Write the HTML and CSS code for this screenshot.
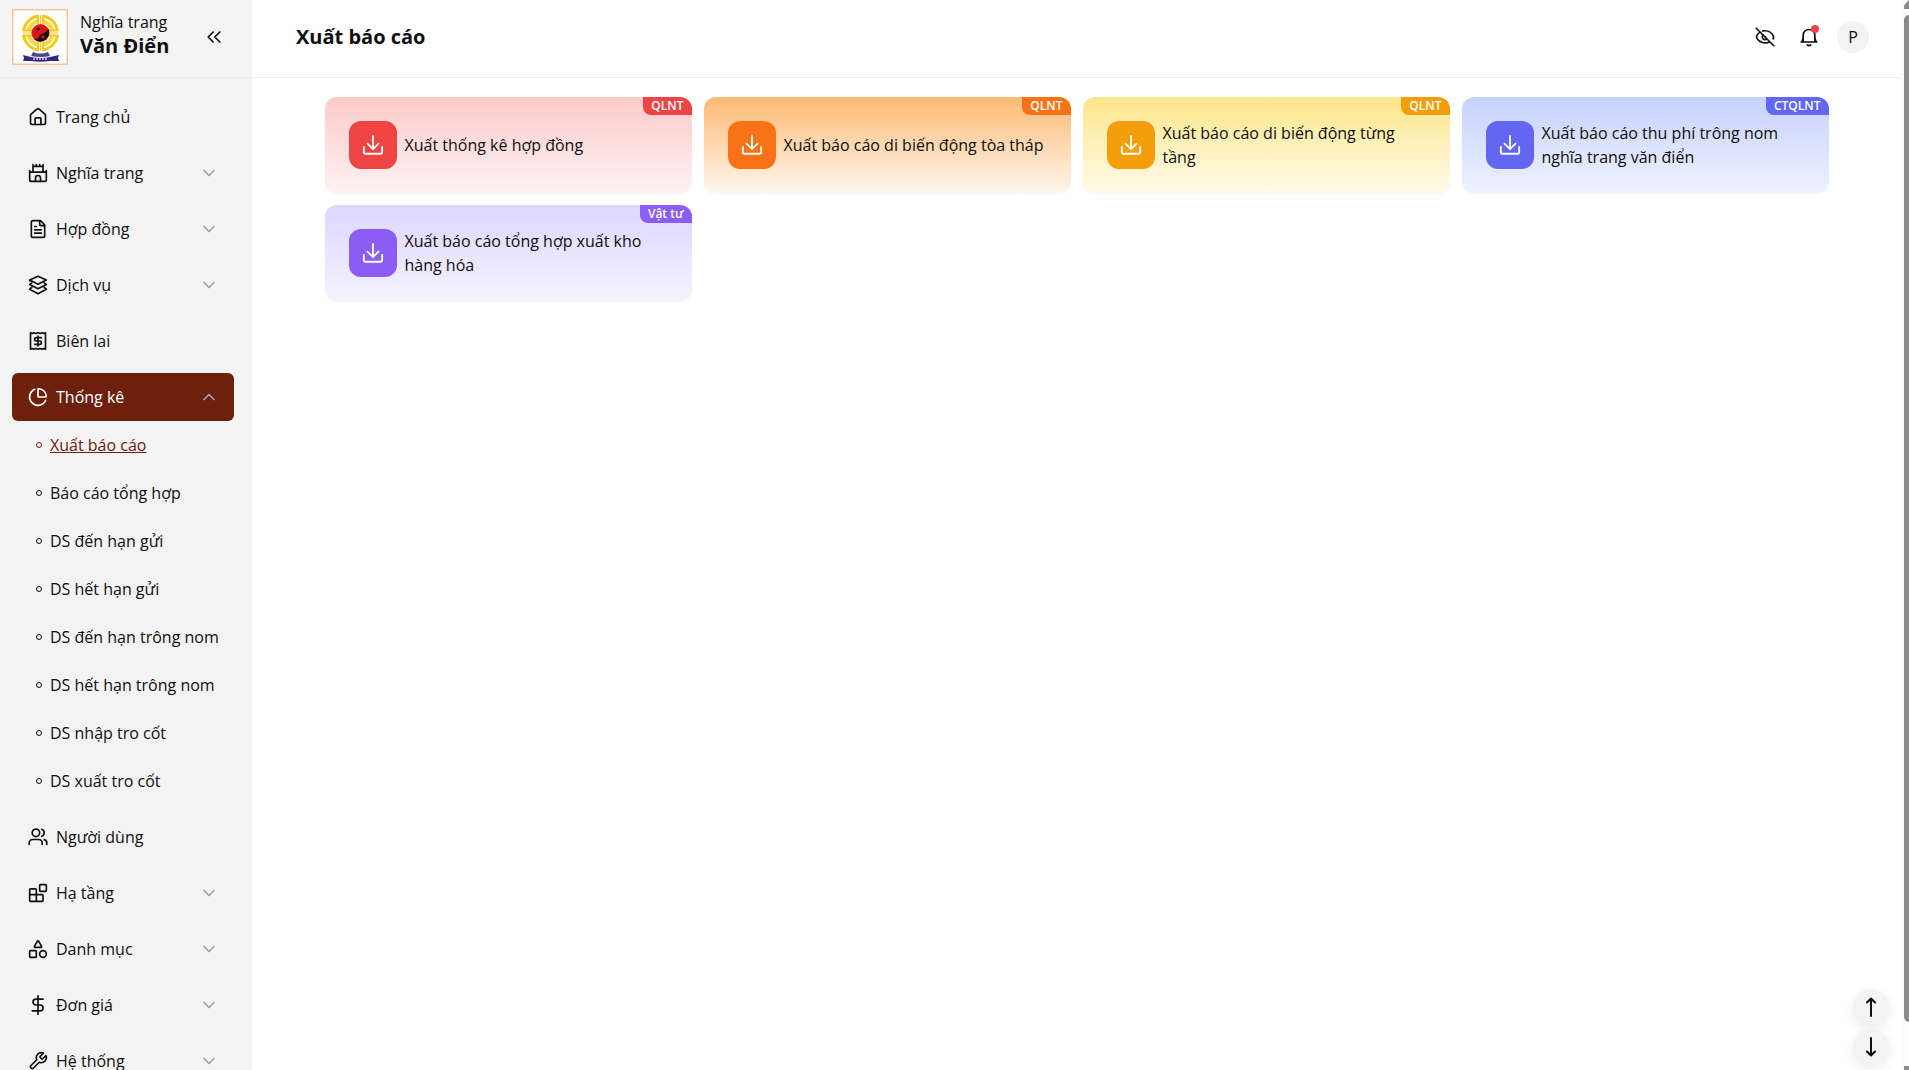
FILE: index.html
```
<!DOCTYPE html>
<html lang="vi">
<head>
  <meta charset="UTF-8">
  <title>Xuất báo cáo</title>
  <link rel="stylesheet" href="styles.css">
</head>
<body>

<svg class="sprite" aria-hidden="true">
  <symbol id="chevron" viewBox="0 0 24 24"><path d="m6 9 6 6 6-6"/></symbol>
  <symbol id="download" viewBox="0 0 24 24"><path d="M12 2v14M6 10.5l6 6 6-6M2 14v5.500a2 2 0 0 0 2 2h16a2 2 0 0 0 2-2V14"/></symbol>
</svg>

<div class="app">
  <aside class="sidebar">
    <div class="brand">
      <svg class="logo" viewBox="0 0 56 56" role="img" aria-label="Logo">
        <rect x="0.5" y="0.5" width="55" height="55" fill="#fff" stroke="#f3c6a0"/>
        <circle cx="28.5" cy="24" r="17" fill="none" stroke="#f4c818" stroke-width="3"/>
        <circle cx="28.5" cy="24" r="12" fill="none" stroke="#f8d840" stroke-width="4"/>
        <path d="M28.5 5v38M9.500 24h38" stroke="#fff" stroke-width="4"/>
        <path d="M26 6v9M31 6v9M26 33v9M31 33v9M11 21.500h9M11 26.500h9M37 21.500h9M37 26.500h9" stroke="#f4c818" stroke-width="2"/>
        <path d="M28.5 6v36M11 24h35" stroke="#f4c818" stroke-width="1"/>
        <circle cx="28.5" cy="24" r="9" fill="#e01414"/>
        <path d="M36 19a9 9 0 0 1-14.500 10.500c3 1.500 5.500 0 6-2.500.500-3 8-2 8.500-8z" fill="#111"/>
        <circle cx="31" cy="28" r="1.500" fill="#e01414"/>
        <circle cx="26" cy="20" r="1.500" fill="#111"/>
        <path d="M21 43q7.500 3 15 0l2 4q-9.500 2-19 0z" fill="#4a4695"/>
        <path d="M11 46l8 2q9.500 2 19 0l9-2-1 3 1 3-9 0q-9.500 1.500-19 0l-8 0 1-3z" fill="#2e2a83"/>
        <path d="M21 50h15" stroke="#d5d3ee" stroke-width="1.500" stroke-dasharray="2 1"/>
      </svg>
      <div class="brand-name">
        <span>Nghĩa trang</span>
        <strong>Văn Điển</strong>
      </div>
      <button class="collapse" aria-label="Thu gọn">
        <svg class="icon" viewBox="0 0 24 24"><path d="m11 18-6-6 6-6M19 18l-6-6 6-6"/></svg>
      </button>
    </div>

    <nav class="menu">
      <a class="item" href="#">
        <svg class="icon" viewBox="0 0 24 24"><path d="M15.500 21v-7a1 1 0 0 0-1-1h-5a1 1 0 0 0-1 1v7"/><path d="M3 10a2 2 0 0 1 .7-1.500l7-6a2 2 0 0 1 2.600 0l7 6A2 2 0 0 1 21 10v9a2 2 0 0 1-2 2H5a2 2 0 0 1-2-2z"/></svg>
        <span>Trang chủ</span>
      </a>
      <button class="item">
        <svg class="icon" viewBox="0 0 24 24"><path d="M22 20v-9H2v9a2 2 0 0 0 2 2h16a2 2 0 0 0 2-2ZM18 11V4H6v7M15 22v-4a3 3 0 0 0-6 0v4M22 11V9M2 11V9M6 4V2M18 4V2M10 4V2M14 4V2"/></svg>
        <span>Nghĩa trang</span>
        <svg class="arrow"><use href="#chevron"/></svg>
      </button>
      <button class="item">
        <svg class="icon" viewBox="0 0 24 24"><path d="M15 2H6a2 2 0 0 0-2 2v16a2 2 0 0 0 2 2h12a2 2 0 0 0 2-2V7ZM14 2v4a2 2 0 0 0 2 2h4M10 9H8M16 13H8M16 17H8"/></svg>
        <span>Hợp đồng</span>
        <svg class="arrow"><use href="#chevron"/></svg>
      </button>
      <button class="item">
        <svg class="icon" viewBox="0 0 24 24"><path d="M12 1.500 22 6 12 11 2 6ZM2 6v1M2 11.500 12 16.500 22 11.500M2 11.500 4.500 9.500M22 11.500 19.500 9.500M2 17 12 22.500 22 17M2 17 4.500 15M22 17 19.500 15"/></svg>
        <span>Dịch vụ</span>
        <svg class="arrow"><use href="#chevron"/></svg>
      </button>
      <a class="item" href="#">
        <svg class="icon" viewBox="0 0 24 24"><path d="M3 2l2 1 2-1 2.500 1L12 2l2.500 1L17 2l2 1 2-1v20l-2-1-2 1-2.500-1-2.500 1-2.500-1L7 22l-2-1-2 1z"/><path d="M16 8h-6a2 2 0 0 0 0 4h4a2 2 0 0 1 0 4H8M12 6v12"/></svg>
        <span>Biên lai</span>
      </a>
      <button class="item active">
        <svg class="icon" viewBox="0 0 24 24"><path d="M21 12c.550 0 1-.450.950-1A10 10 0 0 0 13 2.050c-.550-.050-1 .400-1 .950v8a1 1 0 0 0 1 1z"/><path d="M21.200 15.900A10 10 0 1 1 8 2.800"/></svg>
        <span>Thống kê</span>
        <svg class="arrow"><use href="#chevron"/></svg>
      </button>

      <div class="submenu">
        <a class="subitem current" href="#">Xuất báo cáo</a>
        <a class="subitem" href="#">Báo cáo tổng hợp</a>
        <a class="subitem" href="#">DS đến hạn gửi</a>
        <a class="subitem" href="#">DS hết hạn gửi</a>
        <a class="subitem" href="#">DS đến hạn trông nom</a>
        <a class="subitem" href="#">DS hết hạn trông nom</a>
        <a class="subitem" href="#">DS nhập tro cốt</a>
        <a class="subitem" href="#">DS xuất tro cốt</a>
      </div>

      <a class="item" href="#">
        <svg class="icon" viewBox="0 0 24 24"><path d="M17 21v-2a4 4 0 0 0-4-4H5.500a4 4 0 0 0-4 4v2"/><circle cx="9.500" cy="7" r="4.500"/><path d="M22.500 21v-2a4 4 0 0 0-3-3.800M16.500 2.800a4.500 4.500 0 0 1 0 8.400"/></svg>
        <span>Người dùng</span>
      </a>
      <button class="item">
        <svg class="icon" viewBox="0 0 24 24"><rect x="14" y="2" width="8" height="8" rx="1"/><path d="M10 22V8a1 1 0 0 0-1-1H3a1 1 0 0 0-1 1v13a1 1 0 0 0 1 1h14a1 1 0 0 0 1-1v-6a1 1 0 0 0-1-1H2"/></svg>
        <span>Hạ tầng</span>
        <svg class="arrow"><use href="#chevron"/></svg>
      </button>
      <button class="item">
        <svg class="icon" viewBox="0 0 24 24"><path d="M8.300 10a.700.700 0 0 1-.630-1.080l3.730-6.500a.700.700 0 0 1 1.200 0l3.700 6.500A.700.700 0 0 1 15.700 10Z"/><rect x="2" y="14" width="8" height="8" rx="1"/><circle cx="18" cy="18" r="4"/></svg>
        <span>Danh mục</span>
        <svg class="arrow"><use href="#chevron"/></svg>
      </button>
      <button class="item">
        <svg class="icon" viewBox="0 0 24 24"><path d="M12 1v22M18 5H9.500a3.500 3.500 0 0 0 0 7h5a3.500 3.500 0 0 1 0 7H5"/></svg>
        <span>Đơn giá</span>
        <svg class="arrow"><use href="#chevron"/></svg>
      </button>
      <button class="item">
        <svg class="icon" viewBox="0 0 24 24"><path d="M14.700 6.300a1 1 0 0 0 0 1.400l1.600 1.600a1 1 0 0 0 1.400 0l3.770-3.770a6 6 0 0 1-7.940 7.940l-6.910 6.910a2.120 2.120 0 0 1-3-3l6.910-6.910a6 6 0 0 1 7.940-7.940z"/></svg>
        <span>Hệ thống</span>
        <svg class="arrow"><use href="#chevron"/></svg>
      </button>
    </nav>
  </aside>

  <div class="page">
    <header class="topbar">
      <h1>Xuất báo cáo</h1>
      <div class="tools">
        <button class="tool" aria-label="Ẩn số liệu">
          <svg class="icon" viewBox="0 0 24 24"><path d="M1.500 1.500 22.500 22.500M9 4.800C15 3.500 20 6.500 22 11c.4 1 .3 2-.2 3.200M5.500 6.500C2.500 8.500 1 11.500 2.500 14c2.500 4.500 9.500 6.500 15 4M10 9.500c-2 1.500-1.500 4.500 1 5.500 1.200.4 2.500.2 3.300-.8M12 11.500l1 1"/></svg>
        </button>
        <button class="tool" aria-label="Thông báo">
          <svg class="icon" viewBox="0 0 24 24"><path d="M2.500 18h19M5 17.500V10a7 7 0 0 1 14 0v7.500M5 13l-1.500 5M19 13l1.500 5M10 21.500q2 1.800 4 0"/></svg>
          <span class="dot"></span>
        </button>
        <button class="avatar">P</button>
      </div>
    </header>

    <main class="reports">
      <button class="card red">
        <span class="card-icon"><svg><use href="#download"/></svg></span>
        <span class="card-title">Xuất thống kê hợp đồng</span>
        <span class="tag">QLNT</span>
      </button>
      <button class="card orange">
        <span class="card-icon"><svg><use href="#download"/></svg></span>
        <span class="card-title">Xuất báo cáo di biến động tòa tháp</span>
        <span class="tag">QLNT</span>
      </button>
      <button class="card amber">
        <span class="card-icon"><svg><use href="#download"/></svg></span>
        <span class="card-title">Xuất báo cáo di biến động từng tầng</span>
        <span class="tag">QLNT</span>
      </button>
      <button class="card indigo">
        <span class="card-icon"><svg><use href="#download"/></svg></span>
        <span class="card-title">Xuất báo cáo thu phí trông nom nghĩa trang văn điển</span>
        <span class="tag">CTQLNT</span>
      </button>
      <button class="card violet">
        <span class="card-icon"><svg><use href="#download"/></svg></span>
        <span class="card-title">Xuất báo cáo tổng hợp xuất kho hàng hóa</span>
        <span class="tag">Vật tư</span>
      </button>
    </main>
  </div>

  <div class="scrollbar">
    <span class="scroll-up"></span>
    <span class="thumb"></span>
    <span class="scroll-down"></span>
  </div>
</div>

<div class="jump">
  <button aria-label="Lên đầu trang"><svg viewBox="0 0 20 20"><path d="M10 19V2M6 5.500 10 1.500 14 5.500"/></svg></button>
  <button aria-label="Xuống cuối trang"><svg viewBox="0 0 20 20"><path d="M10 1v17M6 14.500 10 18.500 14 14.500"/></svg></button>
</div>

</body>
</html>
```
FILE: styles.css
```
*, *::before {
  box-sizing: border-box;
}
body {
  margin: 0;
  font-family: "Open Sans", "Noto Sans", sans-serif;
  font-size: 16px;
  line-height: 24px;
  color: #0f0f0f;
  background: #fff;
}
button {
  border: 0;
  padding: 0;
  background: none;
  font: inherit;
  color: inherit;
  cursor: pointer;
}
a {
  color: inherit;
  text-decoration: none;
}
svg {
  flex: none;
  fill: none;
  stroke: currentColor;
  stroke-width: 2;
  stroke-linecap: round;
  stroke-linejoin: round;
}
.sprite {
  display: none;
}
.icon {
  width: 20px;
  height: 20px;
}
.app {
  display: flex;
  height: 100vh;
  overflow: hidden;
}

/* sidebar */
.sidebar {
  display: flex;
  flex-direction: column;
  flex: none;
  width: 252px;
  background: #f3f3f3;
}
.brand {
  display: flex;
  align-items: center;
  flex: none;
  height: 78px;
  padding: 0 28px 4px 12px;
  border-bottom: 1px solid #ebebeb;
}
.logo {
  width: 56px;
  height: 56px;
  stroke: none;
  stroke-linecap: butt;
}
.brand-name {
  flex: 1;
  margin-left: 12px;
  padding-bottom: 6px;
}
.brand-name span,
.brand-name strong {
  display: block;
}
.brand-name strong {
  font-size: 20px;
}
.collapse {
  display: flex;
}
.menu {
  display: flex;
  flex-direction: column;
  gap: 8px;
  flex: 1;
  padding: 15px 18px 15px 12px;
  overflow: hidden;
}
.item {
  display: flex;
  align-items: center;
  gap: 8px;
  flex: none;
  height: 48px;
  padding: 0 15px 0 16px;
  border-radius: 6px;
  text-align: left;
}
.item span {
  flex: 1;
}
.arrow {
  width: 20px;
  height: 20px;
  color: #9ca3af;
}
.item.active {
  background: #6d210c;
  color: #fff;
  font-weight: 500;
}
.active .arrow {
  transform: rotate(180deg);
}
.submenu {
  margin-top: -8px;
}
.subitem {
  display: flex;
  align-items: center;
  gap: 8px;
  height: 48px;
  padding-left: 24px;
}
.subitem::before {
  content: "";
  width: 6px;
  height: 6px;
  border: 1px solid currentColor;
  border-radius: 50%;
}
.subitem.current {
  color: #6d210c;
  text-decoration: underline;
}

/* content */
.page {
  flex: 1;
  min-width: 0;
}
.topbar {
  display: flex;
  align-items: center;
  justify-content: space-between;
  height: 78px;
  padding: 0 32px 4px 44px;
  border-bottom: 1px solid #f0f0f0;
}
.topbar h1 {
  margin: 0;
  font-size: 20px;
  line-height: 28px;
}
.tools {
  display: flex;
  align-items: center;
  gap: 8px;
}
.tool {
  position: relative;
  display: flex;
  align-items: center;
  justify-content: center;
  width: 36px;
  height: 36px;
}
.dot {
  position: absolute;
  top: 6px;
  right: 8px;
  width: 8px;
  height: 8px;
  border-radius: 50%;
  background: #ef4444;
}
.avatar {
  width: 32px;
  height: 32px;
  margin-left: 2px;
  border-radius: 50%;
  background: #f3f3f3;
}
.reports {
  display: grid;
  grid-template-columns: repeat(4, 1fr);
  gap: 12px;
  max-width: 1504px;
  margin: 19px auto 0;
}
.card {
  position: relative;
  display: flex;
  align-items: center;
  gap: 8px;
  min-height: 96px;
  padding: 24px;
  border-radius: 12px;
  overflow: hidden;
  text-align: left;
  box-shadow: 0 1px 2px rgba(0, 0, 0, 0.05);
}
.card-icon {
  display: flex;
  align-items: center;
  justify-content: center;
  flex: none;
  width: 48px;
  height: 48px;
  border-radius: 12px;
  color: #fff;
}
.card-icon svg {
  width: 22px;
  height: 22px;
}
.tag {
  position: absolute;
  top: 0;
  right: 0;
  padding: 0 8px;
  border-bottom-left-radius: 8px;
  font-size: 12px;
  font-weight: 600;
  line-height: 18px;
  color: #fff;
}
.red { background: linear-gradient(#fecaca, #fef2f2); }
.red .card-icon, .red .tag { background: #ef4444; }
.orange { background: linear-gradient(#fdba74, #fff7ed); }
.orange .card-icon, .orange .tag { background: #f97316; }
.amber { background: linear-gradient(#fde68a, #fffbeb); }
.amber .card-icon, .amber .tag { background: #f59e0b; }
.indigo { background: linear-gradient(#c7d2fe, #eef2ff); }
.indigo .card-icon, .indigo .tag { background: #6366f1; }
.violet { background: linear-gradient(#ddd6fe, #f5f3ff); }
.violet .card-icon, .violet .tag { background: #8b5cf6; }

/* scrollbar on the right edge */
.scrollbar {
  display: flex;
  flex-direction: column;
  align-items: flex-end;
  gap: 6px;
  flex: none;
  width: 8px;
  background: #fcfcfc;
}
.scrollbar span {
  width: 5px;
  background: #8b8b8b;
}
.scroll-up {
  height: 9px;
  clip-path: polygon(100% 0, 100% 100%, 0 100%, 0 60%);
}
.scrollbar .thumb {
  flex: 1;
  margin-bottom: 38px;
  border-radius: 5px 0 0 5px;
}
.scroll-down {
  height: 4px;
}

.jump {
  position: fixed;
  right: 20px;
  bottom: 5px;
  display: flex;
  flex-direction: column;
  gap: 4px;
}
.jump button {
  display: flex;
  align-items: center;
  justify-content: center;
  width: 36px;
  height: 36px;
  border-radius: 50%;
  background: #f3f3f3;
  box-shadow: 0 4px 12px rgba(0, 0, 0, 0.08);
}
.jump svg {
  width: 20px;
  height: 20px;
}
```
